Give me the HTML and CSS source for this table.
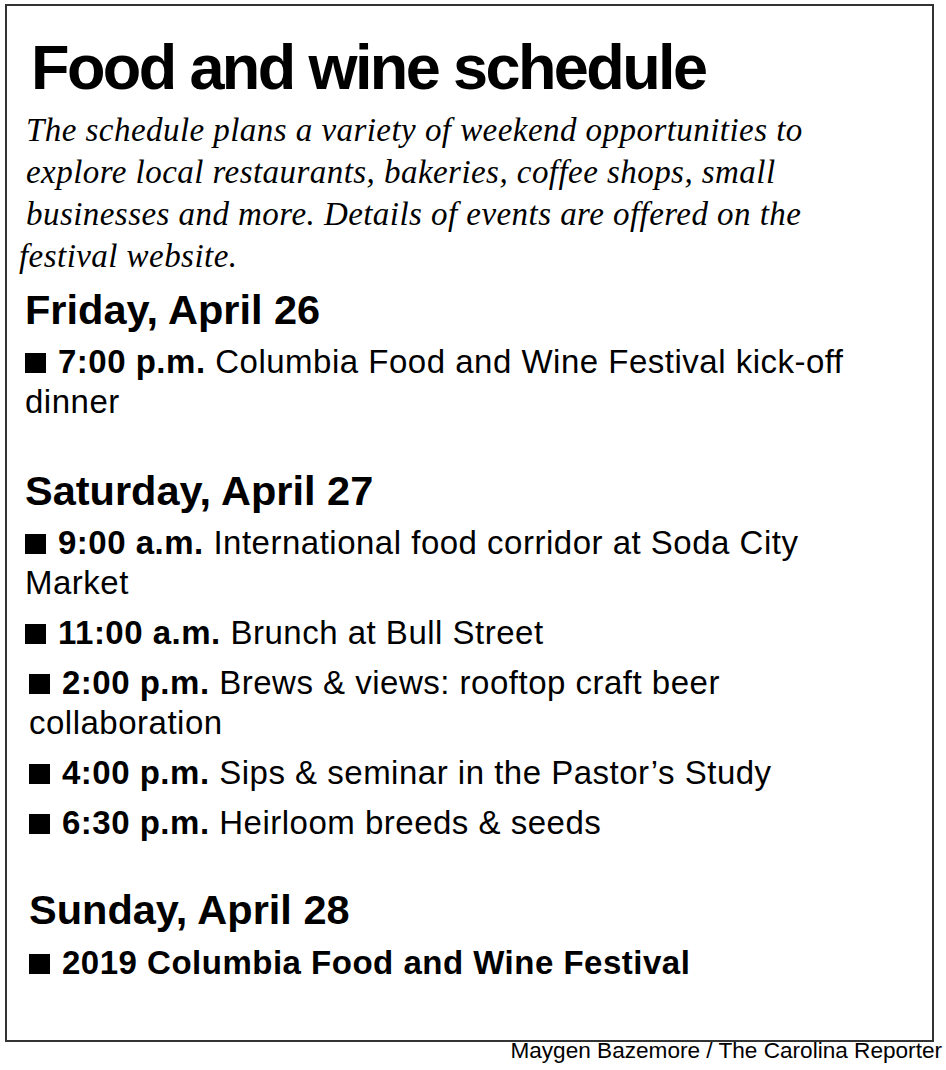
FILE: index.html
```html
<!DOCTYPE html>
<html lang="en">
<head>
<meta charset="utf-8">
<title>Food and wine schedule</title>
<link rel="stylesheet" href="styles.css">
</head>
<body>
<div class="box">
  <h1 class="title">Food and wine schedule</h1>
  <p class="intro">The schedule plans a variety of weekend opportunities to<br>explore local restaurants, bakeries, coffee shops, small<br>businesses and more. Details of events are offered on the<br><span class="outdent">festival website.</span></p>

  <section class="day">
    <h2 class="day-title">Friday, April 26</h2>
    <p class="item"><span class="sq"></span><b>7:00 p.m.</b> Columbia Food and Wine Festival kick-off<br>dinner</p>
  </section>

  <section class="day">
    <h2 class="day-title">Saturday, April 27</h2>
    <p class="item"><span class="sq"></span><b>9:00 a.m.</b> International food corridor at Soda City<br>Market</p>
    <p class="item"><span class="sq"></span><b>11:00 a.m.</b> Brunch at Bull Street</p>
    <p class="item shift"><span class="sq"></span><b>2:00 p.m.</b> Brews &amp; views: rooftop craft beer<br>collaboration</p>
    <p class="item shift"><span class="sq"></span><b>4:00 p.m.</b> Sips &amp; seminar in the Pastor’s Study</p>
    <p class="item shift"><span class="sq"></span><b>6:30 p.m.</b> Heirloom breeds &amp; seeds</p>
  </section>

  <section class="day day-last">
    <h2 class="day-title shift">Sunday, April 28</h2>
    <p class="item shift"><span class="sq"></span><b>2019 Columbia Food and Wine Festival</b></p>
  </section>
</div>
<p class="credit">Maygen Bazemore / The Carolina Reporter</p>
</body>
</html>
```
FILE: styles.css
```css
html, body {
  margin: 0;
  padding: 0;
  background: #ffffff;
}
body {
  width: 946px;
  color: #000;
  font-family: "Liberation Sans", Arial, sans-serif;
}
.box {
  box-sizing: border-box;
  margin: 4px 0 0 5px;
  width: 929px;
  height: 1038px;
  border: 2px solid #333;
  padding: 26px 0 0 18px;
}
.title {
  margin: 0 0 0 6px;
  font-size: 63px;
  line-height: 70px;
  font-weight: 700;
  letter-spacing: -2.6px;
}
.intro {
  margin: 7px 0 0 1px;
  font-family: "Liberation Serif", "Times New Roman", serif;
  font-style: italic;
  font-size: 33px;
  line-height: 42px;
  letter-spacing: 0.45px;
}
.outdent {
  margin-left: -7px;
}
.day {
  margin-top: 10px;
}
.day + .day {
  margin-top: 46px;
}
.day + .day-last {
  margin-top: 44px;
}
.day-title {
  margin: 0;
  font-size: 41.5px;
  line-height: 46px;
  font-weight: 700;
}
.day-title.shift {
  margin-left: 4px;
}
.item {
  margin: 10px 0 0 0;
  font-size: 33px;
  line-height: 40px;
  letter-spacing: 0.5px;
}
.day-title + .item {
  margin-top: 9px;
}
.day-last .day-title + .item {
  margin-top: 10px;
}
.item.shift {
  margin-left: 4px;
}
.item b {
  font-weight: 700;
}
.sq {
  display: inline-block;
  width: 21px;
  height: 20px;
  background: #000;
  margin-right: 12px;
  vertical-align: baseline;
}
.credit {
  margin: -3px 0 0 0;
  width: 942px;
  text-align: right;
  font-size: 22.6px;
  line-height: 24px;
}
```
